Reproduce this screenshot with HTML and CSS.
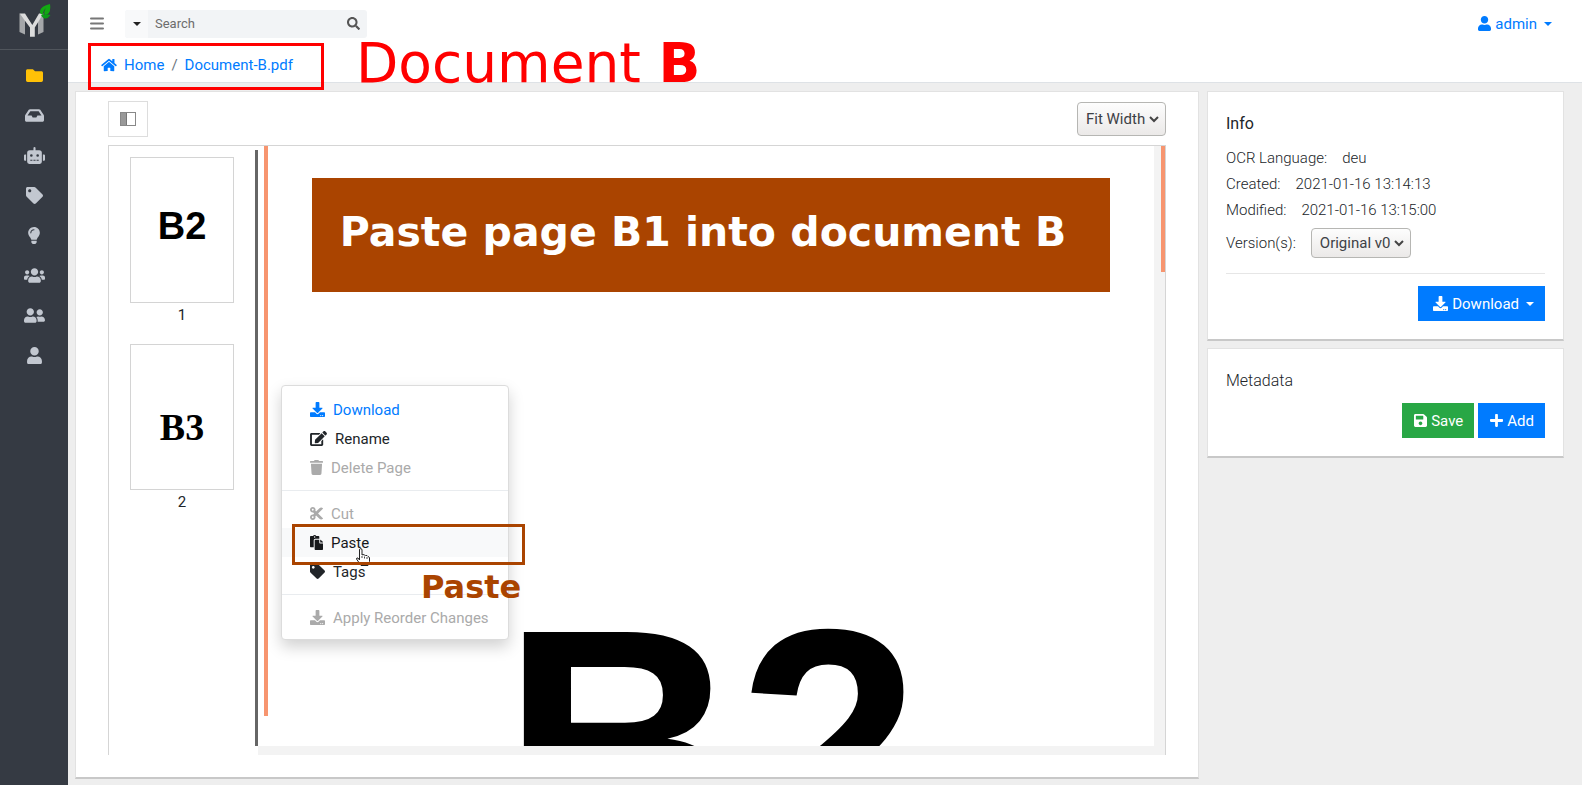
FILE: index.html
```html
<!DOCTYPE html>
<html lang="en">
<head>
<meta charset="utf-8">
<title>Document-B.pdf</title>
<link rel="stylesheet" href="styles.css">
</head>
<body>
<svg class="defs" aria-hidden="true">
  <symbol id="folder" viewBox="0 0 512 512"><path d="M464 128H272l-64-64H48C21.49 64 0 85.49 0 112v288c0 26.51 21.49 48 48 48h416c26.51 0 48-21.49 48-48V176c0-26.51-21.49-48-48-48z"/></symbol>
  <symbol id="inbox" viewBox="0 0 576 512"><path d="M567.938 243.908L462.25 85.374A48.003 48.003 0 0 0 422.311 64H153.689a48 48 0 0 0-39.938 21.374L8.062 243.908A47.994 47.994 0 0 0 0 270.533V400c0 26.51 21.49 48 48 48h480c26.51 0 48-21.49 48-48V270.533a47.994 47.994 0 0 0-8.062-26.625zM162.252 128h251.497l85.333 128H376l-32 64H232l-32-64H76.918l85.334-128z"/></symbol>
  <symbol id="robot" viewBox="0 0 640 512"><path d="M32,224H64V416H32A31.96,31.96,0,0,1,0,384V256A31.96,31.96,0,0,1,32,224Zm512-48V448a64.06,64.06,0,0,1-64,64H160a64.06,64.06,0,0,1-64-64V176a79.97,79.97,0,0,1,80-80H288V32a32,32,0,0,1,64,0V96H464A79.97,79.97,0,0,1,544,176ZM264,256a40,40,0,1,0-40,40A40,40,0,0,0,264,256Zm-8,128H192v32h64Zm96,0H288v32h64ZM456,256a40,40,0,1,0-40,40A40,40,0,0,0,456,256Zm-8,128H384v32h64ZM640,256V384a31.96,31.96,0,0,1-32,32H576V224h32A31.96,31.96,0,0,1,640,256Z"/></symbol>
  <symbol id="tag" viewBox="0 0 512 512"><path d="M0 252.118V48C0 21.49 21.49 0 48 0h204.118a48 48 0 0 1 33.941 14.059l211.882 211.882c18.745 18.745 18.745 49.137 0 67.882L293.823 497.941c-18.745 18.745-49.137 18.745-67.882 0L14.059 286.059A48 48 0 0 1 0 252.118zM112 64c-26.51 0-48 21.49-48 48s21.49 48 48 48 48-21.49 48-48-21.49-48-48-48z"/></symbol>
  <symbol id="bulb" viewBox="0 0 352 512"><path d="M96.06 454.35c.01 6.29 1.87 12.45 5.36 17.69l17.09 25.69a31.99 31.99 0 0 0 26.64 14.28h61.71a31.99 31.99 0 0 0 26.64-14.28l17.09-25.69a31.989 31.989 0 0 0 5.36-17.69l.04-38.35H96.01l.05 38.35zM0 176c0 44.37 16.45 84.85 43.56 115.78 16.52 18.85 42.36 58.23 52.21 91.45.04.26.07.52.11.78h160.24c.04-.26.07-.51.11-.78 9.85-33.22 35.69-72.6 52.21-91.45C335.55 260.85 352 220.37 352 176 352 78.61 272.91-.3 175.45 0 73.44.31 0 82.97 0 176zm176-80c-44.11 0-80 35.89-80 80 0 8.84-7.16 16-16 16s-16-7.16-16-16c0-61.76 50.24-112 112-112 8.84 0 16 7.16 16 16s-7.16 16-16 16z"/></symbol>
  <symbol id="users" viewBox="0 0 640 512"><path d="M96 224c35.3 0 64-28.7 64-64s-28.7-64-64-64-64 28.7-64 64 28.7 64 64 64zm448 0c35.3 0 64-28.7 64-64s-28.7-64-64-64-64 28.7-64 64 28.7 64 64 64zm32 32h-64c-17.6 0-33.5 7.1-45.1 18.6 40.3 22.1 68.9 62 75.1 109.4h66c17.7 0 32-14.3 32-32v-32c0-35.3-28.7-64-64-64zm-256 0c61.9 0 112-50.1 112-112S381.9 32 320 32 208 82.1 208 144s50.1 112 112 112zm76.8 32h-8.3c-20.8 10-43.9 16-68.5 16s-47.6-6-68.5-16h-8.3C179.6 288 128 339.6 128 403.2V432c0 26.5 21.5 48 48 48h288c26.5 0 48-21.5 48-48v-28.8c0-63.6-51.6-115.2-115.2-115.2zm-223.7-13.4C161.5 263.1 145.6 256 128 256H64c-35.3 0-64 28.7-64 64v32c0 17.7 14.3 32 32 32h65.9c6.3-47.4 34.9-87.3 75.2-109.4z"/></symbol>
  <symbol id="friends" viewBox="0 0 640 512"><path d="M192 256c61.9 0 112-50.1 112-112S253.9 32 192 32 80 82.1 80 144s50.1 112 112 112zm76.8 32h-8.3c-20.8 10-43.9 16-68.5 16s-47.6-6-68.5-16h-8.3C51.6 288 0 339.6 0 403.2V432c0 26.5 21.5 48 48 48h288c26.5 0 48-21.5 48-48v-28.8c0-63.6-51.6-115.2-115.2-115.2zM480 256c53 0 96-43 96-96s-43-96-96-96-96 43-96 96 43 96 96 96zm48 32h-3.8c-13.9 4.8-28.6 8-44.2 8s-30.3-3.2-44.2-8H432c-20.4 0-39.2 5.9-55.7 15.4 24.4 26.3 39.7 61.2 39.7 99.8v38.4c0 2.2-.5 4.3-.6 6.4H592c26.5 0 48-21.5 48-48 0-61.9-50.1-112-112-112z"/></symbol>
  <symbol id="user" viewBox="0 0 448 512"><path d="M224 256c70.7 0 128-57.3 128-128S294.7 0 224 0 96 57.3 96 128s57.3 128 128 128zm89.6 32h-16.7c-22.2 10.2-46.9 16-72.9 16s-50.6-5.8-72.9-16h-16.7C60.2 288 0 348.2 0 422.4V464c0 26.5 21.5 48 48 48h352c26.5 0 48-21.5 48-48v-41.6c0-74.2-60.2-134.4-134.4-134.4z"/></symbol>
  <symbol id="home" viewBox="0 0 576 512"><path d="M280.37 148.26L96 300.11V464a16 16 0 0 0 16 16l112.06-.29a16 16 0 0 0 15.92-16V368a16 16 0 0 1 16-16h64a16 16 0 0 1 16 16v95.64a16 16 0 0 0 16 16.05L464 480a16 16 0 0 0 16-16V300L295.67 148.26a12.19 12.19 0 0 0-15.3 0zM571.6 251.47L488 182.56V44.05a12 12 0 0 0-12-12h-56a12 12 0 0 0-12 12v72.61L318.47 43a48 48 0 0 0-61 0L4.34 251.47a12 12 0 0 0-1.6 16.9l25.5 31A12 12 0 0 0 45.15 301l235.22-193.74a12.19 12.19 0 0 1 15.3 0L530.9 301a12 12 0 0 0 16.9-1.6l25.5-31a12 12 0 0 0-1.7-16.93z"/></symbol>
  <symbol id="search" viewBox="0 0 512 512"><path d="M505 442.7L405.3 343c-4.5-4.5-10.6-7-17-7H372c27.6-35.3 44-79.7 44-128C416 93.1 322.9 0 208 0S0 93.1 0 208s93.1 208 208 208c48.3 0 92.7-16.4 128-44v16.3c0 6.4 2.5 12.5 7 17l99.7 99.7c9.4 9.4 24.6 9.4 33.9 0l28.3-28.3c9.4-9.4 9.4-24.6.1-34zM208 336c-70.7 0-128-57.2-128-128 0-70.7 57.2-128 128-128 70.7 0 128 57.2 128 128 0 70.7-57.2 128-128 128z"/></symbol>
  <symbol id="download" viewBox="0 0 512 512"><path d="M216 0h80c13.3 0 24 10.7 24 24v168h87.7c17.8 0 26.7 21.5 14.1 34.1L269.7 378.3c-7.5 7.5-19.8 7.5-27.3 0L90.1 226.1c-12.6-12.6-3.7-34.1 14.1-34.1H192V24c0-13.3 10.7-24 24-24zm296 376v112c0 13.3-10.7 24-24 24H24c-13.3 0-24-10.7-24-24V376c0-13.3 10.7-24 24-24h146.7l49 49c20.1 20.1 52.5 20.1 72.6 0l49-49H488c13.3 0 24 10.7 24 24zm-124 88c0-11-9-20-20-20s-20 9-20 20 9 20 20 20 20-9 20-20zm64 0c0-11-9-20-20-20s-20 9-20 20 9 20 20 20 20-9 20-20z"/></symbol>
  <symbol id="edit" viewBox="0 0 576 512"><path d="M402.6 83.2l90.2 90.2c3.8 3.8 3.8 10 0 13.8L274.4 405.6l-92.8 10.3c-12.4 1.4-22.9-9.1-21.5-21.5l10.3-92.8L388.8 83.2c3.8-3.8 10-3.8 13.8 0zm162-22.9l-48.8-48.8c-15.2-15.2-39.9-15.2-55.2 0l-35.4 35.4c-3.8 3.8-3.8 10 0 13.8l90.2 90.2c3.8 3.8 10 3.8 13.8 0l35.4-35.4c15.2-15.3 15.2-40 0-55.2zM384 346.2V448H64V128h229.8c3.2 0 6.2-1.3 8.5-3.5l40-40c7.6-7.6 2.2-20.5-8.5-20.5H48C21.5 64 0 85.5 0 112v352c0 26.5 21.5 48 48 48h352c26.5 0 48-21.5 48-48V306.2c0-10.7-12.9-16-20.5-8.5l-40 40c-2.2 2.3-3.5 5.3-3.5 8.5z"/></symbol>
  <symbol id="trash" viewBox="0 0 448 512"><path d="M432 32H312l-9.4-18.7A24 24 0 0 0 281.1 0H166.8a23.72 23.72 0 0 0-21.4 13.3L136 32H16A16 16 0 0 0 0 48v32a16 16 0 0 0 16 16h416a16 16 0 0 0 16-16V48a16 16 0 0 0-16-16zM53.2 467a48 48 0 0 0 47.9 45h245.8a48 48 0 0 0 47.9-45L416 128H32z"/></symbol>
  <symbol id="cut" viewBox="0 0 448 512"><path d="M278.06 256L444.48 89.57c4.69-4.69 4.69-12.29 0-16.97-32.8-32.8-85.99-32.8-118.79 0L210.18 188.12l-24.86-24.86c4.31-10.92 6.68-22.81 6.68-35.26 0-53.02-42.98-96-96-96S0 74.98 0 128s42.98 96 96 96c4.54 0 8.99-.32 13.36-.93L142.29 256l-32.93 32.93c-4.37-.61-8.83-.93-13.36-.93-53.02 0-96 42.98-96 96s42.98 96 96 96 96-42.98 96-96c0-12.45-2.37-24.34-6.68-35.26l24.86-24.86L325.69 439.4c32.8 32.8 85.99 32.8 118.79 0 4.69-4.68 4.69-12.28 0-16.97L278.06 256zM96 160c-17.64 0-32-14.36-32-32s14.36-32 32-32 32 14.36 32 32-14.36 32-32 32zm0 256c-17.64 0-32-14.36-32-32s14.36-32 32-32 32 14.36 32 32-14.36 32-32 32z"/></symbol>
  <symbol id="paste" viewBox="0 0 448 512"><path d="M128 184c0-30.879 25.122-56 56-56h136V56c0-13.255-10.745-24-24-24h-80.61C204.306 12.89 183.637 0 160 0s-44.306 12.89-55.39 32H24C10.745 32 0 42.745 0 56v336c0 13.255 10.745 24 24 24h104V184zm32-144c13.255 0 24 10.745 24 24s-10.745 24-24 24-24-10.745-24-24 10.745-24 24-24zm184 248h104v200c0 13.255-10.745 24-24 24H184c-13.255 0-24-10.745-24-24V184c0-13.255 10.745-24 24-24h136v104c0 13.2 10.8 24 24 24zm104-38.059V256h-96v-96h6.059a24 24 0 0 1 16.97 7.029l65.941 65.941a24.002 24.002 0 0 1 7.03 16.971z"/></symbol>
  <symbol id="save" viewBox="0 0 448 512"><path d="M433.941 129.941l-83.882-83.882A48 48 0 0 0 316.118 32H48C21.49 32 0 53.49 0 80v352c0 26.51 21.49 48 48 48h352c26.51 0 48-21.49 48-48V163.882a48 48 0 0 0-14.059-33.941zM224 416c-35.346 0-64-28.654-64-64 0-35.346 28.654-64 64-64s64 28.654 64 64c0 35.346-28.654 64-64 64zm96-304.52V212c0 6.627-5.373 12-12 12H76c-6.627 0-12-5.373-12-12V108c0-6.627 5.373-12 12-12h228.52c3.183 0 6.235 1.264 8.485 3.515l3.48 3.48A11.996 11.996 0 0 1 320 111.48z"/></symbol>
  <symbol id="plus" viewBox="0 0 448 512"><path d="M416 208H272V64c0-17.67-14.33-32-32-32h-32c-17.67 0-32 14.33-32 32v144H32c-17.67 0-32 14.33-32 32v32c0 17.67 14.33 32 32 32h144v144c0 17.67 14.33 32 32 32h32c17.67 0 32-14.33 32-32V304h144c17.67 0 32-14.33 32-32v-32c0-17.67-14.33-32-32-32z"/></symbol>
</svg>

<div class="app">
  <nav class="rail" aria-label="Main">
    <a class="brand" href="#" aria-label="Start page">
      <svg width="33" height="35" viewBox="0 -4 33 35">
        <path fill="#a5a7aa" d="M1.500 6.500L7 13v14.500l-5.500-2.500z"/>
        <path fill="#a5a7aa" d="M20 14l5.500-7v18L20 27.500z"/>
        <path fill="#dcdcdc" d="M1.500 6.500H7L14.300 18 21 6.500h4.500L16.800 20.500v9.200H12v-9.200z"/>
        <path fill="#12a812" d="M32-3q1.500 10-5 11-2-3 1-7-4 3-2.500 7-4-1-3.500-4 1-5 10-7z"/>
        <path fill="#0c9a18" d="M23 8q5-1.500 9.500 0-3 4.500-6.500 3.200-2-1-3-3.200z"/>
      </svg>
    </a>
    <a class="rail-link current" href="#" aria-label="Documents"><svg width="17" height="17"><use href="#folder"/></svg></a>
    <a class="rail-link" href="#" aria-label="Inbox"><svg width="19" height="17"><use href="#inbox"/></svg></a>
    <a class="rail-link" href="#" aria-label="Automates"><svg width="21" height="17"><use href="#robot"/></svg></a>
    <a class="rail-link" href="#" aria-label="Tags"><svg width="17" height="17"><use href="#tag"/></svg></a>
    <a class="rail-link" href="#" aria-label="Logs"><svg width="12" height="17"><use href="#bulb"/></svg></a>
    <a class="rail-link" href="#" aria-label="Groups"><svg width="21" height="17"><use href="#users"/></svg></a>
    <a class="rail-link" href="#" aria-label="Roles"><svg width="21" height="17"><use href="#friends"/></svg></a>
    <a class="rail-link" href="#" aria-label="Users"><svg width="15" height="17"><use href="#user"/></svg></a>
  </nav>

  <div class="page">
    <header class="header">
      <div class="topbar">
        <button class="menu-btn" type="button" aria-label="Toggle menu"><svg width="14" height="13" viewBox="0 0 14 13"><path d="M1 1.500h12M1 6.500h12M1 11.500h12" stroke="#777" stroke-width="2" stroke-linecap="round"/></svg></button>
        <form class="search">
          <button class="search-opts" type="button" aria-label="Search options"><span class="caret"></span></button>
          <input class="search-input" type="text" placeholder="Search" aria-label="Search">
          <button class="search-go" type="button" aria-label="Search"><svg width="13" height="13"><use href="#search"/></svg></button>
        </form>
        <button class="account" type="button"><svg width="13" height="15"><use href="#user"/></svg><span>admin</span><span class="caret"></span></button>
      </div>
      <nav class="crumbs" aria-label="Breadcrumb">
        <a class="crumb" href="#"><svg width="16" height="14"><use href="#home"/></svg>Home</a>
        <span class="slash">/</span>
        <a class="crumb" href="#">Document-B.pdf</a>
      </nav>
    </header>

    <main class="content">
      <section class="card viewer">
        <div class="viewer-bar">
          <button class="panel-btn" type="button" aria-label="Toggle thumbnails"><svg width="16" height="14" viewBox="0 0 16 14"><rect x=".5" y=".5" width="15" height="13" fill="#fff" stroke="#888"/><path fill="#999" d="M1 1h5v12H1z"/><path stroke="#777" d="M6.500 1v12"/></svg></button>
          <select class="select fit" aria-label="Zoom"><option>Fit Width</option></select>
        </div>
        <div class="viewer-body">
          <div class="thumbs">
            <figure class="thumb"><div class="sheet sans">B2</div><figcaption>1</figcaption></figure>
            <figure class="thumb"><div class="sheet serif">B3</div><figcaption>2</figcaption></figure>
          </div>
          <div class="splitter"></div>
          <div class="pages">
            <div class="left-scroll"></div>
            <div class="sheet-big">B2</div>
            <div class="right-scroll"></div>
            <div class="bottom-scroll"></div>
          </div>
        </div>
      </section>

      <aside class="side">
        <section class="card info">
          <h2 class="info-title">Info</h2>
          <dl class="facts">
            <div class="fact"><dt>OCR Language:</dt><dd>deu</dd></div>
            <div class="fact"><dt>Created:</dt><dd>2021-01-16 13:14:13</dd></div>
            <div class="fact"><dt>Modified:</dt><dd>2021-01-16 13:15:00</dd></div>
          </dl>
          <div class="version">
            <label for="version">Version(s):</label>
            <select class="select ver" id="version"><option>Original v0</option></select>
          </div>
          <div class="actions ruled">
            <button class="btn blue wide" type="button"><svg width="15" height="15"><use href="#download"/></svg>Download<span class="caret"></span></button>
          </div>
        </section>
        <section class="card meta">
          <h2 class="meta-title">Metadata</h2>
          <div class="actions">
            <button class="btn green" type="button"><svg width="13" height="15"><use href="#save"/></svg>Save</button>
            <button class="btn blue" type="button"><svg width="13" height="15"><use href="#plus"/></svg>Add</button>
          </div>
        </section>
      </aside>
    </main>
  </div>
</div>

<div class="menu" role="menu">
  <button class="item link" role="menuitem"><svg width="15" height="15"><use href="#download"/></svg>Download</button>
  <button class="item" role="menuitem"><svg width="17" height="15"><use href="#edit"/></svg>Rename</button>
  <button class="item off" role="menuitem" disabled><svg width="13" height="15"><use href="#trash"/></svg>Delete Page</button>
  <hr class="rule">
  <button class="item off" role="menuitem" disabled><svg width="13" height="15"><use href="#cut"/></svg>Cut</button>
  <button class="item hover" role="menuitem"><svg width="13" height="15"><use href="#paste"/></svg>Paste</button>
  <button class="item" role="menuitem"><svg width="15" height="15"><use href="#tag"/></svg>Tags</button>
  <hr class="rule">
  <button class="item off" role="menuitem" disabled><svg width="15" height="15"><use href="#download"/></svg>Apply Reorder Changes</button>
</div>
<svg class="pointer" width="15" height="18" viewBox="0 0 15 18"><path d="M4.500 12V2q0-1.500 1.200-1.500T7 2v5l1-.5 1.500.5 1 .5 1.500 0 1 1 1.500 1v4l-1.500 4h-7l-4.500-6.500q0-1.500 1.500-1z" fill="#fff" stroke="#222"/><path d="M7 8v2M9.500 8.500v2M12 9v2" stroke="#444"/></svg>
<div class="note banner">Paste page B1 into document B</div>
<div class="note frame-red"></div>
<div class="note frame-brown"></div>
<div class="note title-note">Document <b>B</b></div>
<div class="note paste-note">Paste</div>
</body>
</html>
```
FILE: styles.css
```css
* { box-sizing: border-box; }

body {
  margin: 0;
  background: #eee;
  color: #212529;
  font: 400 16px/24px Roboto, sans-serif;
}

button, input, select { font: inherit; color: inherit; border: 0; background: none; padding: 0; margin: 0; border-radius: 0; }
a { color: #007bff; text-decoration: none; }
svg { fill: currentColor; flex: none; }
.defs { display: none; }

.caret { border: 4px solid transparent; border-top-color: currentColor; border-bottom: 0; }

.app { display: flex; min-height: 100vh; }

.rail { width: 68px; flex: none; background: #353a43; }
.brand { display: flex; justify-content: center; align-items: center; height: 50px; border-bottom: 1px solid #50555c; margin-bottom: 5px; padding-bottom: 8px; }
.rail-link { display: flex; justify-content: center; align-items: center; height: 40px; color: #c2c7d0; }
.rail-link.current { color: #ffc107; }

.page { flex: 1; min-width: 0; display: flex; flex-direction: column; }
.header { background: #fff; border-bottom: 1px solid #dee2e6; }
.topbar { display: flex; align-items: center; height: 47px; padding: 0 30px 0 22px; }
.menu-btn { display: flex; margin-right: 21px; }
.search { display: flex; height: 28px; width: 242px; background: #f2f4f6; border-radius: 3px; overflow: hidden; }
.search-opts { width: 23px; background: #f8f9fa; display: flex; align-items: center; justify-content: center; color: #222; }
.search-input { flex: 1; min-width: 0; padding: 0 7px; font-size: 13px; outline: 0; }
.search-input::placeholder { color: #6c6c6c; opacity: 1; }
.search-go { width: 28px; display: flex; align-items: center; justify-content: center; color: #555; }
.account { margin-left: auto; display: flex; align-items: center; gap: 4px; color: #007bff; font-size: 15px; }
.account .caret { margin-left: 3px; }
.crumbs { display: flex; align-items: center; gap: 7px; height: 35px; padding-left: 33px; font-size: 15px; }
.crumb { display: flex; align-items: center; gap: 7px; }
.slash { color: #6c757d; }

.content { flex: 1; display: grid; grid-template-columns: minmax(0, 1fr) 357px; gap: 8px; padding: 8px 18px 6px 7px; }
.card { background: #fff; border: 1px solid #e2e2e2; border-bottom: 2px solid #c8c8c8; }
.viewer { display: flex; flex-direction: column; padding: 9px 32px 22px; }
.viewer-bar { display: flex; justify-content: space-between; align-items: center; height: 36px; margin-bottom: 8px; }
.panel-btn { width: 40px; height: 36px; border: 1px solid #ddd; display: flex; align-items: center; justify-content: center; }
.select {
  appearance: none;
  border: 1px solid #b6b6b3;
  border-radius: 4px;
  color: #3d4146;
  padding: 0 16px 0 8px;
  font-size: 15px;
  font-weight: 400;
  background:
    url("data:image/svg+xml,%3Csvg xmlns='http://www.w3.org/2000/svg' width='10' height='7'%3E%3Cpath d='M1 1l4 4 4-4' fill='none' stroke='%23444' stroke-width='2'/%3E%3C/svg%3E") no-repeat right 6px center,
    linear-gradient(#fdfdfd, #ebe9e8);
}
.fit { height: 34px; width: 89px; }
.ver { height: 30px; width: 100px; }

.viewer-body { flex: 1; display: flex; border: solid #d5d5d5; border-width: 1px 1px 0; }
.thumbs { width: 146px; flex: none; display: flex; flex-direction: column; align-items: center; gap: 16px; padding-top: 11px; }
.thumb { margin: 0; text-align: center; font-size: 15px; }
.thumb figcaption { line-height: 25px; }
.sheet { width: 104px; height: 146px; border: 1px solid #d4d4d4; color: #000; font-weight: 700; font-size: 38px; }
.sans { font-family: "Liberation Sans", sans-serif; line-height: 136px; }
.serif { font-family: "Liberation Serif", serif; line-height: 164px; }
.splitter { width: 3px; background: #666; margin: 4px 0 9px; }
.pages { flex: 1; position: relative; overflow: hidden; }
.left-scroll { position: absolute; left: 6px; top: 0; bottom: 39px; width: 4px; background: #f7956f; }
.right-scroll { position: absolute; right: 0; top: 0; bottom: 0; width: 11px; background: linear-gradient(#f7956f, #f7956f) right top / 4px 126px no-repeat #f3f3f3; }
.bottom-scroll { position: absolute; left: 0; right: 0; bottom: 0; height: 9px; background: #f3f3f3; }
.sheet-big { position: absolute; left: 244px; top: 434px; font: 700 327px/327px "Liberation Sans", sans-serif; color: #000; }

.side { display: flex; flex-direction: column; gap: 7px; }
.info, .meta { padding: 20px 18px 18px; }
.info-title { margin: 0 0 9px; font-size: 16px; font-weight: 400; }
.facts { margin: 0; }
.fact { display: flex; gap: 15px; line-height: 26px; }
.fact dd { margin: 0; }
.facts, .version { font-weight: 300; font-size: 15px; }
.version { display: flex; align-items: center; gap: 15px; padding: 5px 0 15px; }
.actions { display: flex; justify-content: flex-end; gap: 4px; }
.ruled { border-top: 1px solid #e6e6e6; padding-top: 12px; }
.btn { display: flex; align-items: center; gap: 4px; height: 35px; padding: 0 11px 0 12px; color: #fff; font-size: 15px; }
.wide { padding: 0 11px 0 15px; }
.btn .caret { margin-left: 3px; }
.blue { background: #007bff; }
.green { background: #28a745; }
.meta-title { margin: 0 0 10px; font-size: 16px; font-weight: 300; }

/* Floating menu and the annotations drawn over the page */
.menu { position: absolute; left: 281px; top: 385px; width: 228px; padding: 9px 0 7px; background: #fff; border: 1px solid #dcdcdc; border-radius: 4px; box-shadow: 0 7px 15px rgba(0, 0, 0, .18); }
.item { display: flex; align-items: center; gap: 8px; width: 100%; height: 29px; padding-left: 28px; color: #212529; font-size: 15px; }
.item.link { color: #007bff; }
.item.off { color: #aaa; }
.item.hover { background: #f8f9fa; color: #16181b; }
.rule { margin: 8px 0; border: 0; border-top: 1px solid #e9ecef; }
.pointer { position: absolute; left: 355px; top: 548px; }

.note { position: absolute; font-family: "DejaVu Sans", sans-serif; white-space: nowrap; }
.banner { left: 312px; top: 178px; width: 798px; height: 114px; background: #a40; color: #fff; font-size: 41px; font-weight: 700; line-height: 108px; text-align: center; padding-right: 16px; }
.frame-red { left: 88px; top: 43px; width: 236px; height: 47px; border: 3px solid red; }
.frame-brown { left: 292px; top: 524px; width: 233px; height: 41px; border: 3px solid #a40; }
.title-note { left: 356px; top: 31px; font-size: 55px; line-height: 64px; color: red; }
.paste-note { left: 421px; top: 568px; font-size: 32px; line-height: 38px; font-weight: 700; color: #a40; }
```
